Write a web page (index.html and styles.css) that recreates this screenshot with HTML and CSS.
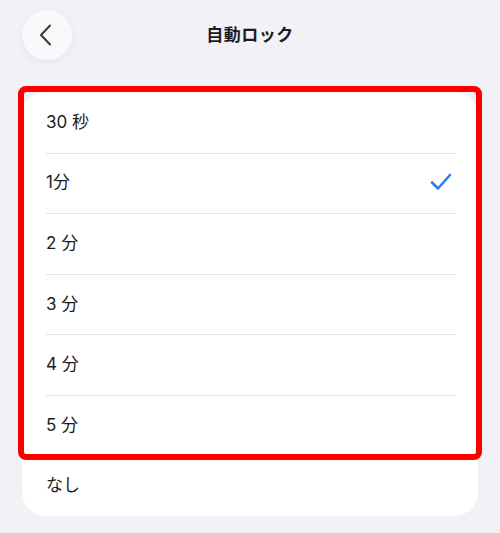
FILE: index.html
```html
<!DOCTYPE html>
<html lang="ja">
<head>
<meta charset="utf-8">
<link rel="stylesheet" href="styles.css">
</head>
<body>
<div class="screen">
  <header class="nav">
    <button class="back" aria-label="戻る">
      <svg width="14" height="22" viewBox="0 0 14 22"><path d="M11 1.5 L2 11 L11 20.5" fill="none" stroke="#3a3a3c" stroke-width="2" stroke-linecap="round" stroke-linejoin="round"/></svg>
    </button>
    <h1 class="title">自動ロック</h1>
  </header>

  <div class="list-wrap">
    <ul class="list">
      <li class="row"><span>30 秒</span></li>
      <li class="row"><span>1分</span>
        <svg class="check" width="22" height="18" viewBox="0 0 22 18"><path d="M2 9.5 L8 15.5 L20 2" fill="none" stroke="#2f80e4" stroke-width="2.6" stroke-linecap="round" stroke-linejoin="round"/></svg>
      </li>
      <li class="row"><span>2 分</span></li>
      <li class="row"><span>3 分</span></li>
      <li class="row"><span>4 分</span></li>
      <li class="row"><span>5 分</span></li>
      <li class="row"><span>なし</span></li>
    </ul>
    <div class="highlight"></div>
  </div>
</div>
</body>
</html>
```

FILE: styles.css
```css
html, body {
  margin: 0;
  padding: 0;
  background: #f1f1f6;
}

.screen {
  width: 500px;
  height: 533px;
  font-family: "Inter", "Noto Sans CJK JP", sans-serif;
  color: #1c1c1e;
}

.nav {
  position: relative;
  height: 70px;
  display: flex;
  align-items: center;
  justify-content: center;
}

.back {
  position: absolute;
  left: 22px;
  top: 10px;
  width: 50px;
  height: 50px;
  border: none;
  border-radius: 50%;
  background: #f9f9fc;
  box-shadow: 0 2px 10px rgba(0, 0, 0, 0.05);
  display: flex;
  align-items: center;
  justify-content: center;
  padding: 0 2px 0 0;
}

.title {
  margin: 0 0 4px;
  font-size: 17px;
  font-weight: 700;
  letter-spacing: 0.5px;
}

.list-wrap {
  position: relative;
  margin: 22px 22px 0;
}

.list {
  list-style: none;
  margin: 0;
  padding: 0;
  background: #fff;
  border-radius: 24px;
  overflow: hidden;
}

.row {
  position: relative;
  height: 60.6px;
  box-sizing: border-box;
  display: flex;
  align-items: center;
  justify-content: space-between;
  padding: 0 26px 4px 24px;
  font-size: 17px;
}

.row + .row::before {
  content: "";
  position: absolute;
  left: 24px;
  right: 23px;
  top: 0;
  height: 1px;
  background: #e4e4e9;
}

.check {
  margin-top: 2px;
}

.highlight {
  position: absolute;
  left: -4px;
  right: -4px;
  top: -6px;
  height: 374px;
  box-sizing: border-box;
  border: 6px solid #fc0000;
  border-radius: 8px;
  pointer-events: none;
}
```
